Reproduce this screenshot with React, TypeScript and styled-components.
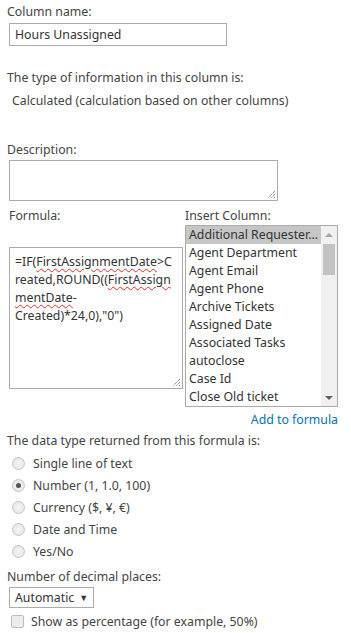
import styled, { createGlobalStyle } from 'styled-components';

const GlobalStyle = createGlobalStyle`
    body {
        margin: 0;
        background: #fff;
        font-family: 'Noto Sans', 'Liberation Sans', sans-serif;
        font-size: 12.3px;
        color: #444;
    }
`;

const Page = styled.div`
    width: 351px;
    height: 633px;
    padding: 3px 0 0 7px;
    box-sizing: border-box;
    overflow: hidden;
`;

const Label = styled.div<{ $top?: number; $indent?: number }>`
    height: 18px;
    line-height: 18px;
    margin-top: ${({ $top = 0 }) => $top}px;
    padding-left: ${({ $indent = 0 }) => $indent}px;
    white-space: nowrap;
`;

const TextInput = styled.div`
    width: 218px;
    height: 23px;
    margin: 2px 0 0 2px;
    border: 1px solid #ababab;
    box-sizing: border-box;
    padding-left: 5px;
    line-height: 21px;
    color: #333;
`;

const AreaWrap = styled.div<{ $top: number }>`
    margin-top: ${({ $top }) => $top}px;
`;

const Area = styled.div<{ $w: number; $h: number }>`
    position: relative;
    width: ${({ $w }) => $w}px;
    height: ${({ $h }) => $h}px;
    border: 1px solid #ababab;
    box-sizing: border-box;
    background: #fff;
`;

const Grip = styled.svg`
    position: absolute;
    right: 1px;
    bottom: 1px;
`;

const FormulaRow = styled.div`
    display: flex;
    margin-top: 6px;
`;

const FormulaCol = styled.div`
    width: 176px;
    padding-left: 2px;
`;

const InsertCol = styled.div`
    display: flex;
    flex-direction: column;
`;

const FormulaText = styled.div`
    padding: 5px 0 0 5px;
    line-height: 18px;
    color: #333;
    white-space: pre;
`;

const Typo = styled.span`
    text-decoration: underline wavy #e52b2b;
    text-decoration-thickness: 1px;
    text-underline-offset: 2px;
`;

const ListBox = styled.div`
    display: flex;
    width: 153px;
    height: 182px;
    border: 1px solid #ababab;
    box-sizing: border-box;
`;

const ListItems = styled.div`
    flex: 1;
    min-width: 0;
    overflow: hidden;
`;

const ListItem = styled.div<{ $selected?: boolean }>`
    height: 18px;
    line-height: 18px;
    padding-left: 3px;
    white-space: nowrap;
    overflow: hidden;
    color: #333;
    background: ${({ $selected }) => ($selected ? '#c6c6c6' : 'transparent')};
`;

const Scrollbar = styled.div`
    width: 16px;
    background: #f0f0f0;
    display: flex;
    flex-direction: column;
    align-items: center;
`;

const ScrollArrow = styled.div<{ $down?: boolean }>`
    height: 17px;
    width: 16px;
    display: flex;
    align-items: center;
    justify-content: center;
    &::after {
        content: '';
        border-left: 4px solid transparent;
        border-right: 4px solid transparent;
        ${({ $down }) => ($down ? 'border-top: 4px solid #606060;' : 'border-bottom: 4px solid #a3a3a3;')}
    }
`;

const Thumb = styled.div`
    width: 12px;
    height: 31px;
    margin-top: 1px;
    background: #c2c2c2;
`;

const Spacer = styled.div`
    flex: 1;
`;

const LinkRow = styled.div`
    width: 331px;
    margin-top: 4px;
    text-align: right;
    line-height: 18px;
`;

const Link = styled.span`
    color: #0072c6;
`;

const Options = styled.div`
    display: flex;
    flex-direction: column;
    margin-top: 4px;
    padding-left: 5px;
    gap: 4px;
`;

const Option = styled.div`
    display: flex;
    align-items: center;
    height: 18px;
    gap: 8px;
    white-space: nowrap;
`;

const Radio = styled.span<{ $checked?: boolean }>`
    width: 13px;
    height: 13px;
    border-radius: 50%;
    box-sizing: border-box;
    border: 1px solid #c4c4c4;
    background: radial-gradient(circle, #f4f4f4 0%, #e4e4e4 100%);
    display: flex;
    align-items: center;
    justify-content: center;
    &::after {
        content: '';
        display: ${({ $checked }) => ($checked ? 'block' : 'none')};
        width: 5px;
        height: 5px;
        border-radius: 50%;
        background: #555;
    }
`;

const Select = styled.div`
    display: inline-flex;
    align-items: center;
    gap: 5px;
    height: 21px;
    margin: 1px 0 0 2px;
    padding: 0 5px 0 5px;
    border: 1px solid #ababab;
    box-sizing: border-box;
    color: #333;
`;

const Caret = styled.span`
    font-size: 9px;
    color: #333;
`;

const CheckRow = styled.div`
    display: flex;
    align-items: center;
    gap: 7px;
    margin: 4px 0 0 4px;
    height: 18px;
    white-space: nowrap;
`;

const Checkbox = styled.span`
    width: 13px;
    height: 13px;
    border-radius: 2px;
    box-sizing: border-box;
    border: 1px solid #bdbdbd;
    background: #ececec;
`;

const ResizeGrip = () => (
    <Grip width="10" height="10" viewBox="0 0 10 10">
        <path d="M9 2 L2 9 M9 5 L5 9 M9 8 L8 9" stroke="#555" strokeWidth="1" strokeDasharray="1 1" />
    </Grip>
);

const columns = [
    'Additional Requester...',
    'Agent Department',
    'Agent Email',
    'Agent Phone',
    'Archive Tickets',
    'Assigned Date',
    'Associated Tasks',
    'autoclose',
    'Case Id',
    'Close Old ticket',
];

const dataTypes = [
    'Single line of text',
    'Number (1, 1.0, 100)',
    'Currency ($, ¥, €)',
    'Date and Time',
    'Yes/No',
];

export default function App() {
    return (
        <Page>
            <GlobalStyle />
            <Label>Column name:</Label>
            <TextInput>Hours Unassigned</TextInput>

            <Label $top={23}>The type of information in this column is:</Label>
            <Label $top={5} $indent={5}>Calculated (calculation based on other columns)</Label>

            <Label $top={31}>Description:</Label>
            <AreaWrap $top={1} style={{ paddingLeft: 2 }}>
                <Area $w={269} $h={41}>
                    <ResizeGrip />
                </Area>
            </AreaWrap>

            <FormulaRow>
                <FormulaCol>
                    <Label>Formula:</Label>
                    <AreaWrap $top={22}>
                        <Area $w={174} $h={142}>
                            <FormulaText>
                                =IF(<Typo>FirstAssignmentDate</Typo>&gt;C{'\n'}
                                reated,ROUND((<Typo>FirstAssign</Typo>{'\n'}
                                <Typo>mentDate</Typo>-{'\n'}
                                Created)*24,0),"0")
                            </FormulaText>
                            <ResizeGrip />
                        </Area>
                    </AreaWrap>
                </FormulaCol>
                <InsertCol>
                    <Label>Insert Column:</Label>
                    <ListBox>
                        <ListItems>
                            {columns.map((c, i) => (
                                <ListItem key={c} $selected={i === 0}>
                                    {c}
                                </ListItem>
                            ))}
                        </ListItems>
                        <Scrollbar>
                            <ScrollArrow />
                            <Thumb />
                            <Spacer />
                            <ScrollArrow $down />
                        </Scrollbar>
                    </ListBox>
                </InsertCol>
            </FormulaRow>
            <LinkRow>
                <Link>Add to formula</Link>
            </LinkRow>

            <Label $top={3}>The data type returned from this formula is:</Label>
            <Options>
                {dataTypes.map((t, i) => (
                    <Option key={t}>
                        <Radio $checked={i === 1} />
                        {t}
                    </Option>
                ))}
            </Options>

            <Label $top={8}>Number of decimal places:</Label>
            <Select>
                Automatic <Caret>▼</Caret>
            </Select>
            <CheckRow>
                <Checkbox />
                Show as percentage (for example, 50%)
            </CheckRow>
        </Page>
    );
}
